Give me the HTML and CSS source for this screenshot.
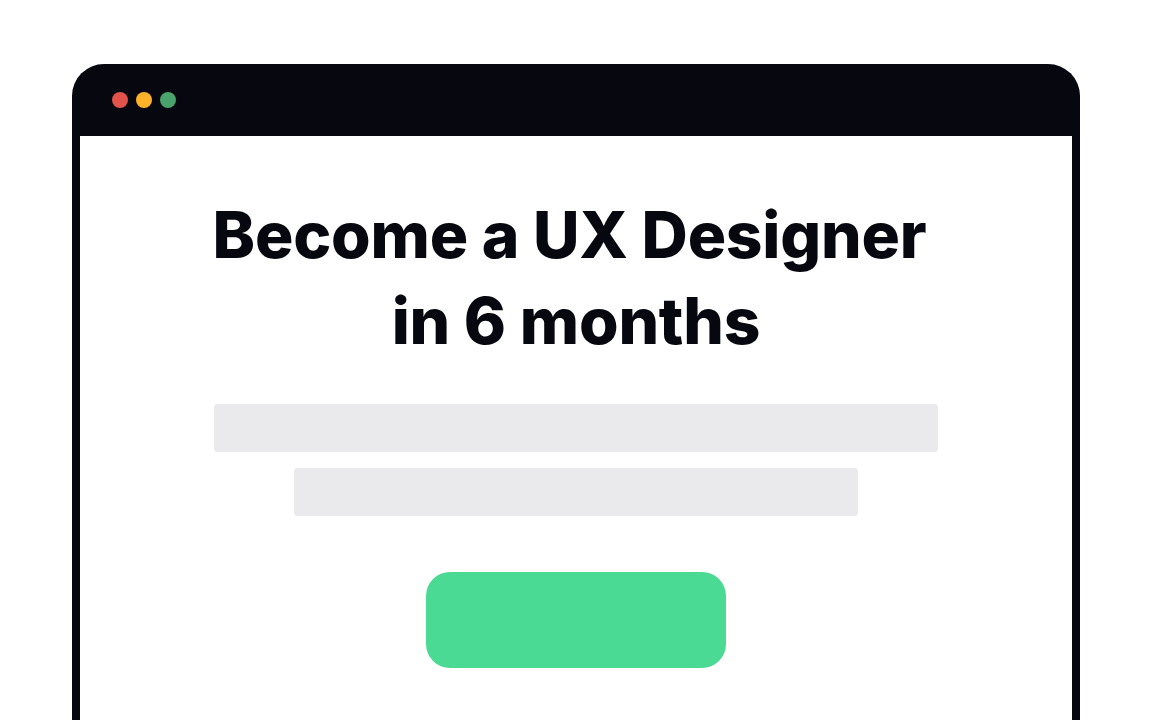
FILE: index.html
```html
<!DOCTYPE html>
<html lang="en">
<head>
<meta charset="utf-8">
<title>Become a UX Designer</title>
<link rel="stylesheet" href="styles.css">
</head>
<body>
<div class="window">
  <div class="titlebar">
    <span class="dot dot-red"></span>
    <span class="dot dot-yellow"></span>
    <span class="dot dot-green"></span>
  </div>
  <div class="content">
    <h1 class="headline">Become a UX Designer<br>in 6 months</h1>
    <div class="bar bar-wide"></div>
    <div class="bar bar-narrow"></div>
    <div class="cta"></div>
  </div>
</div>
</body>
</html>
```

FILE: styles.css
```css
html, body {
  margin: 0;
  padding: 0;
  background: #ffffff;
  overflow: hidden;
}
body {
  height: 720px;
  font-family: Inter, "Liberation Sans", sans-serif;
}
.window {
  margin: 64px 0 0 72px;
  width: 1008px;
  height: 656px;
  box-sizing: border-box;
  background: #06070f;
  border-radius: 32px 32px 0 0;
  padding: 0 8px;
  display: flex;
  flex-direction: column;
}
.titlebar {
  height: 72px;
  box-sizing: border-box;
  padding: 28px 0 0 32px;
  display: flex;
  gap: 8px;
  flex-shrink: 0;
}
.dot {
  width: 16px;
  height: 16px;
  border-radius: 50%;
  display: block;
}
.dot-red { background: #e2534b; }
.dot-yellow { background: #fdb22a; }
.dot-green { background: #4aa36b; }
.content {
  flex: 1;
  background: #ffffff;
  display: flex;
  flex-direction: column;
  align-items: center;
  padding-top: 56px;
}
.headline {
  margin: 0;
  font-size: 64px;
  line-height: 86px;
  font-weight: 800;
  color: #06070f;
  text-align: center;
  letter-spacing: -0.2px;
  text-indent: -13px;
}
.bar {
  height: 48px;
  background: #eaeaec;
  border-radius: 4px;
}
.bar-wide {
  width: 724px;
  margin-top: 40px;
}
.bar-narrow {
  width: 564px;
  margin-top: 16px;
}
.cta {
  width: 300px;
  height: 96px;
  margin-top: 56px;
  background: #4ada94;
  border-radius: 24px;
}
```
